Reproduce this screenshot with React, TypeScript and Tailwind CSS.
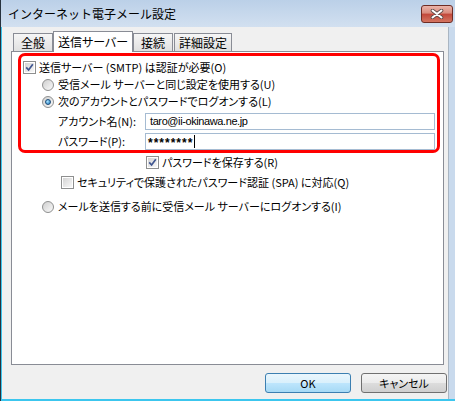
import React from "react";

const jp = "[font-family:'Noto_Sans_CJK_JP','Noto_Sans',sans-serif] [font-feature-settings:'palt']";

function CheckBox({ checked }: { checked?: boolean }) {
  return (
    <span className="flex h-[13px] w-[13px] shrink-0 border border-[#8e8f8f] bg-white p-[1px]">
      <span className="flex flex-1 items-center justify-center bg-gradient-to-br from-[#d4d4d4] to-[#f8f8f8]">
        {checked && (
          <svg width="9" height="9" viewBox="0 0 9 9">
            <path d="M1.2 4.4 L3.6 7 L7.8 1.2" stroke="#3f5590" strokeWidth="1.7" fill="none" />
          </svg>
        )}
      </span>
    </span>
  );
}

function Radio({ checked }: { checked?: boolean }) {
  return (
    <span className="flex h-[12px] w-[12px] shrink-0 items-center justify-center rounded-full border border-[#8e8f8f] bg-gradient-to-br from-[#cfcfcf] to-[#fafafa]">
      {checked && (
        <span className="h-[6px] w-[6px] rounded-full border border-[#1d4c78] bg-[radial-gradient(circle_at_35%_35%,#a8e4ff,#1f78c0)]" />
      )}
    </span>
  );
}

function Tab({ label, width, active }: { label: string; width: string; active?: boolean }) {
  if (active) {
    return (
      <div
        className={`relative z-10 mb-[-1px] flex h-[21px] items-center justify-center border border-b-0 border-[#898c95] bg-white ${width}`}
      >
        {label}
      </div>
    );
  }
  return (
    <div
      className={`flex h-[18px] items-center justify-center border border-b-0 border-[#898c95] bg-gradient-to-b from-[#f6f6f6] to-[#e0e0e0] ${width}`}
    >
      {label}
    </div>
  );
}

export default function App() {
  return (
    <div className={`flex h-[401px] w-[455px] flex-col border-l border-[#27323d] bg-[#c9daed] text-[11px] leading-none text-black ${jp}`}>
      {/* タイトルバー */}
      <div className="flex h-[27px] shrink-0 items-center justify-between bg-gradient-to-b from-[#bbd0e8] to-[#d2e0f0] pl-[7px] pr-[2px]">
        <span className="text-[12px] [font-feature-settings:normal]">インターネット電子メール設定</span>
        <div className="flex h-[18px] w-[32px] items-center justify-center rounded-[3px] border border-[#6e2c24] bg-[linear-gradient(#eab4aa,#d98a7c_45%,#c2473a_50%,#d47561)]">
          <svg width="14" height="10" viewBox="0 0 14 10">
            <path d="M2.5 1.5 L11.5 8.5 M11.5 1.5 L2.5 8.5" stroke="#5b4a48" strokeWidth="3.6" strokeLinecap="round" />
            <path d="M2.5 1.5 L11.5 8.5 M11.5 1.5 L2.5 8.5" stroke="#ffffff" strokeWidth="2" strokeLinecap="round" />
          </svg>
        </div>
      </div>

      <div className="flex flex-1">
        <div className="w-[1px] bg-[#3cc6ee]" />
        <div className="flex flex-1 flex-col border-r border-[#a9b5c2] bg-[#f0f0f0] pl-[9px] pt-[4px]">
          {/* タブ */}
          <div className="flex h-[20px] items-end pl-[2px] text-[12px]">
            <Tab label="全般" width="w-[40px]" />
            <Tab label="送信サーバー" width="w-[80px]" active />
            <Tab label="接続" width="w-[40px]" />
            <div className="w-[1px]" />
            <Tab label="詳細設定" width="w-[58px]" />
          </div>

          <div className="h-[314px] w-[433px] border border-[#898c95] bg-white">
            <div className="ml-[6px] mt-[1px] w-[422px] rounded-[7px] border-[3px] border-[#ff0000] px-[2px]">
              <div className="mt-[3px] flex h-[17px] items-center gap-[3px]">
                <CheckBox checked />
                <span>送信サーバー (SMTP) は認証が必要(O)</span>
              </div>
              <div className="ml-[19px] flex h-[17px] items-center gap-[4px]">
                <Radio />
                <span>受信メール サーバーと同じ設定を使用する(U)</span>
              </div>
              <div className="ml-[19px] flex h-[17px] items-center gap-[4px]">
                <Radio checked />
                <span>次のアカウントとパスワードでログオンする(L)</span>
              </div>
              <div className="ml-[35px] mt-[3px] flex h-[17px] items-center">
                <span className="w-[87px]">アカウント名(N):</span>
                <div className="flex h-[17px] w-[290px] items-center border border-[#a5bbd2] bg-white pl-[4px] [font-family:'Liberation_Sans',sans-serif] text-[11px] tracking-[-0.4px]">
                  taro@ii-okinawa.ne.jp
                </div>
              </div>
              <div className="ml-[35px] mt-[3px] flex h-[17px] items-center">
                <span className="w-[87px]">パスワード(P):</span>
                <div className="flex h-[17px] w-[290px] items-center border border-[#a5bbd2] bg-white pl-[2px]">
                  <span className="pt-[3px] [font-family:'Liberation_Sans',sans-serif] text-[12px] font-bold tracking-[1px]">********</span>
                  <span className="ml-[1px] h-[13px] w-[1px] bg-black" />
                </div>
              </div>
            </div>

            <div className="ml-[134px] mt-[3px] flex h-[13px] items-center gap-[3px]">
              <CheckBox checked />
              <span>パスワードを保存する(R)</span>
            </div>
            <div className="ml-[49px] mt-[7px] flex h-[13px] items-center gap-[3px]">
              <CheckBox />
              <span>セキュリティで保護されたパスワード認証 (SPA) に対応(Q)</span>
            </div>
            <div className="ml-[30px] mt-[11px] flex h-[13px] items-center gap-[4px]">
              <Radio />
              <span>メールを送信する前に受信メール サーバーにログオンする(I)</span>
            </div>
          </div>

          {/* ボタン */}
          <div className="mt-[8px] flex justify-end gap-[10px] pr-[1px]">
            <button className="flex h-[20px] w-[86px] items-center justify-center rounded-[3px] border border-[#3c7fb1] bg-[linear-gradient(#eaf6fd,#d9f0fc_50%,#bee6fd_50%,#a7d9f5)]">
              OK
            </button>
            <button className="flex h-[20px] w-[86px] items-center justify-center rounded-[3px] border border-[#707070] bg-[linear-gradient(#f4f4f4,#ebebeb_50%,#dddddd_50%,#cfcfcf)]">
              キャンセル
            </button>
          </div>
        </div>
        <div className="w-[6px]" />
      </div>
      <div className="h-[2px] shrink-0 bg-[#3cc6ee]" />
    </div>
  );
}
